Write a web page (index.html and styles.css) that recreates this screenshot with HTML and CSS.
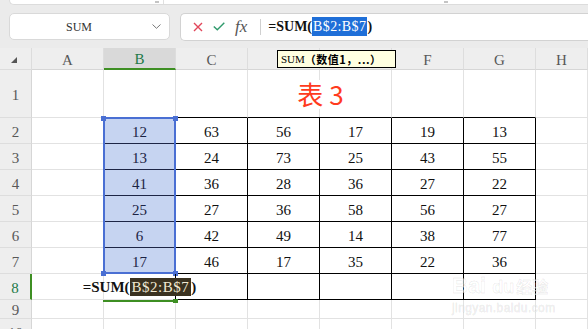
FILE: index.html
```html
<!DOCTYPE html>
<html lang="zh">
<head>
    <meta charset="UTF-8">
    <meta name="viewport" content="width=device-width, initial-scale=1.0">
    <title>表 3 - SUM</title>
    <link rel="stylesheet" href="styles.css">
</head>
<body>
<div class="app">
    <!-- window strip above the toolbar -->
    <div class="top-strip">
        <span class="grip"></span>
        <span class="strip-divider"></span>
        <span class="grip grip-far"></span>
    </div>

    <!-- Name box + formula bar -->
    <div class="toolbar">
        <div class="name-box">
            <span class="name-text">SUM</span>
            <svg class="chevron" width="9" height="5" viewBox="0 0 9 5"><path d="M0.5 0.5 L4.5 4.3 L8.5 0.5" fill="none" stroke="#777" stroke-width="1"/></svg>
        </div>
        <div class="formula-bar">
            <svg class="fb-cancel" width="10" height="10" viewBox="0 0 10 10"><path d="M1 1 L9 9 M9 1 L1 9" stroke="#e2465a" stroke-width="1.4"/></svg>
            <svg class="fb-ok" width="12" height="9" viewBox="0 0 12 9"><path d="M0.8 4.4 L4.3 7.8 L11.3 0.8" fill="none" stroke="#2f9a6c" stroke-width="1.4"/></svg>
            <span class="fb-fx">fx</span>
            <span class="fb-divider"></span>
            <span class="fb-text">=SUM(<span class="ref-edit">B$2:B$7</span>)</span>
        </div>
    </div>

    <!-- Sheet -->
    <div class="sheet">
        <div class="corner"><span class="corner-mark"></span></div>
        <div class="ch">A</div>
        <div class="ch active">B</div>
        <div class="ch">C</div>
        <div class="ch"></div>
        <div class="ch"></div>
        <div class="ch">F</div>
        <div class="ch">G</div>
        <div class="ch">H</div>

        <div class="rh tall">1</div>
        <div class="c"></div>
        <div class="c tt"></div>
        <div class="c tt"></div>
        <div class="c tt title-cell"><span class="title">表 3</span></div>
        <div class="c tt"></div>
        <div class="c tt"></div>
        <div class="c"></div>

        <div class="rh">2</div>
        <div class="c tl"></div>
        <div class="c t sel">12</div>
        <div class="c t">63</div>
        <div class="c t">56</div>
        <div class="c t">17</div>
        <div class="c t">19</div>
        <div class="c t">13</div>
        <div class="c"></div>

        <div class="rh">3</div>
        <div class="c tl"></div>
        <div class="c t sel">13</div>
        <div class="c t">24</div>
        <div class="c t">73</div>
        <div class="c t">25</div>
        <div class="c t">43</div>
        <div class="c t">55</div>
        <div class="c"></div>

        <div class="rh">4</div>
        <div class="c tl"></div>
        <div class="c t sel">41</div>
        <div class="c t">36</div>
        <div class="c t">28</div>
        <div class="c t">36</div>
        <div class="c t">27</div>
        <div class="c t">22</div>
        <div class="c"></div>

        <div class="rh">5</div>
        <div class="c tl"></div>
        <div class="c t sel">25</div>
        <div class="c t">27</div>
        <div class="c t">36</div>
        <div class="c t">58</div>
        <div class="c t">56</div>
        <div class="c t">27</div>
        <div class="c"></div>

        <div class="rh">6</div>
        <div class="c tl"></div>
        <div class="c t sel">6</div>
        <div class="c t">42</div>
        <div class="c t">49</div>
        <div class="c t">14</div>
        <div class="c t">38</div>
        <div class="c t">77</div>
        <div class="c"></div>

        <div class="rh">7</div>
        <div class="c tl"></div>
        <div class="c t sel">17</div>
        <div class="c t">46</div>
        <div class="c t">17</div>
        <div class="c t">35</div>
        <div class="c t">22</div>
        <div class="c t">36</div>
        <div class="c"></div>

        <div class="rh active">8</div>
        <div class="c"></div>
        <div class="c editing"><span class="cell-formula">=SUM(<span class="ref-cell">B$2:B$7</span>)</span></div>
        <div class="c t"></div>
        <div class="c t"></div>
        <div class="c t"></div>
        <div class="c t"></div>
        <div class="c t"></div>
        <div class="c"></div>

        <div class="rh short">9</div>
        <div class="c"></div>
        <div class="c"></div>
        <div class="c"></div>
        <div class="c"></div>
        <div class="c"></div>
        <div class="c"></div>
        <div class="c"></div>
        <div class="c"></div>

        <div class="rh">10</div>
        <div class="c"></div>
        <div class="c"></div>
        <div class="c"></div>
        <div class="c"></div>
        <div class="c"></div>
        <div class="c"></div>
        <div class="c"></div>
        <div class="c"></div>

        <!-- range picked by the formula -->
        <div class="selection">
            <span class="handle tl-h"></span>
            <span class="handle tr-h"></span>
            <span class="handle bl-h"></span>
            <span class="handle br-h"></span>
        </div>
    </div>

    <!-- argument tooltip -->
    <div class="tooltip">SUM<b>（数值1，...）</b></div>

    <!-- faint site watermark -->
    <div class="watermark">
        <div class="wm-logo">Bai<span class="wm-du">du</span><span class="wm-cn">经验</span></div>
        <div class="wm-url">jingyan.baidu.com</div>
    </div>
</div>
</body>
</html>
```

FILE: styles.css
```css
* {
    box-sizing: border-box;
}

body {
    margin: 0;
    overflow: hidden;
    font-family: "Liberation Serif", "Noto Sans CJK SC", serif;
}

.app {
    position: relative;
    width: 588px;
    height: 329px;
    overflow: hidden;
    background: #ebebeb;
}

/* Top strip */
.top-strip {
    height: 5px;
    margin-left: 9px;
    background: #fff;
    border-left: 1px solid #dcdcdc;
    border-bottom: 1px solid #dcdcdc;
    border-bottom-left-radius: 5px;
    display: flex;
}

.grip {
    width: 4px;
    height: 2px;
    margin-left: 145px;
    margin-top: 1px;
    background: #c4c4c4;
}

.strip-divider {
    width: 1px;
    margin-left: 4px;
    background: #e0e0e0;
}

.grip-far {
    margin-left: 280px;
}

/* Toolbar */
.toolbar {
    height: 43px;
    display: flex;
    align-items: center;
    padding-left: 9px;
    gap: 10px;
}

.name-box {
    width: 161px;
    height: 27px;
    background: #fff;
    border: 1px solid #d9d9d9;
    border-radius: 5px;
    display: grid;
    grid-template-columns: 1fr 16px;
    align-items: center;
    padding-right: 5px;
}

.name-text {
    text-align: center;
    font-size: 12px;
    color: #333;
    padding-top: 1px;
}

.chevron {
    display: block;
    margin-left: 4px;
}

.formula-bar {
    flex: 1;
    height: 28px;
    background: #fff;
    border: 1px solid #d2d2d2;
    border-right: none;
    border-radius: 5px 0 0 5px;
    display: flex;
    align-items: center;
    padding-left: 12px;
}

.fb-ok {
    margin-left: 10px;
}

.fb-fx {
    margin-left: 10px;
    font-style: italic;
    font-size: 17px;
    color: #555;
    line-height: 1;
}

.fb-divider {
    width: 1px;
    height: 16px;
    margin-left: 13px;
    background: #d0d0d0;
}

.fb-text {
    margin-left: 7px;
    font-size: 14px;
    font-weight: bold;
    color: #111;
    white-space: nowrap;
}

.ref-edit {
    background: #1f6fd8;
    color: #fff;
    font-weight: normal;
    padding: 2px 1px;
    letter-spacing: 0.4px;
}

/* Sheet grid */
.sheet {
    position: relative;
    display: grid;
    grid-template-columns: 32px repeat(7, 72px) 52px;
    grid-template-rows: 22px 48px repeat(7, 26px) 19px 26px;
    background: #fff;
    font-size: 15px;
    color: #111;
}

.corner,
.ch,
.rh {
    background: #eeeeee;
    color: #585858;
    display: flex;
    align-items: center;
    justify-content: center;
}

.corner {
    border-right: 1px solid #dcdcdc;
    border-bottom: 1px solid #dcdcdc;
    justify-content: flex-start;
    padding-left: 11px;
    padding-top: 3px;
}

.corner-mark {
    width: 0;
    height: 0;
    border-left: 6px solid transparent;
    border-bottom: 6px solid #555;
}

.ch {
    font-size: 15px;
    border-right: 1px solid #dddddd;
    border-bottom: 1px solid #d6d6d6;
    padding-top: 3px;
}

.ch.active {
    background: #d9d9d9;
    color: #1d7a48;
    border-bottom: 2px solid #3e8f23;
}

.rh {
    font-size: 15px;
    border-right: 1px solid #d6d6d6;
    border-bottom: 1px solid #dddddd;
    padding-top: 3px;
}

.rh.active {
    color: #1d7a48;
    border-right: 2px solid #3e8f23;
}

.c {
    border-right: 1px solid #e2e2e2;
    border-bottom: 1px solid #e2e2e2;
    display: flex;
    align-items: center;
    justify-content: center;
    padding-top: 3px;
}

/* table borders */
.tt {
    border-bottom-color: #000;
}

.tl {
    border-right-color: #000;
}

.t {
    border-right-color: #000;
    border-bottom-color: #000;
}

.sel {
    background: #c6d4f1;
    color: #1b2344;
    border-bottom-color: #1d2546;
}

/* Title row */
.title-cell {
    grid-column: span 2;
    position: relative;
    padding-top: 2px;
}

.title-cell::after {
    content: '';
    position: absolute;
    top: 0;
    bottom: 0;
    left: 71px;
    width: 1px;
    background: #e2e2e2;
}

.title {
    position: relative;
    z-index: 1;
    background: #fff;
    padding: 0 2px 0 4px;
    font-family: "Noto Sans CJK SC", sans-serif;
    font-size: 26px;
    line-height: 1.1;
    color: #ff3b1e;
    white-space: nowrap;
}

/* Cell being edited */
.editing {
    position: relative;
    z-index: 1;
    border-right-color: #000;
    white-space: nowrap;
    padding-top: 2px;
}

.editing::after {
    content: '';
    position: absolute;
    left: -1px;
    right: 1px;
    bottom: -3px;
    height: 2px;
    background: #3e8f23;
}

.editing::before {
    content: '';
    position: absolute;
    right: -3px;
    bottom: -4px;
    width: 5px;
    height: 4px;
    background: #3e8f23;
}

.cell-formula {
    font-size: 15px;
    font-weight: bold;
    color: #111;
}

.ref-cell {
    background: #3a3220;
    color: #f1ead2;
    font-weight: normal;
    padding: 1px 2px;
    letter-spacing: 0.5px;
}

/* Selection box over B2:B7 */
.selection {
    position: absolute;
    left: 103px;
    top: 69px;
    width: 73px;
    height: 157px;
    border: 2px solid #4a6fd3;
    pointer-events: none;
}

.handle {
    position: absolute;
    width: 5px;
    height: 5px;
    background: #4a6fd3;
}

.tl-h {
    left: -4px;
    top: -3px;
}

.tr-h {
    right: -4px;
    top: -3px;
}

.bl-h {
    left: -4px;
    bottom: -4px;
}

.br-h {
    right: -4px;
    bottom: -4px;
}

/* Argument tooltip */
.tooltip {
    position: absolute;
    left: 277px;
    top: 50px;
    width: 119px;
    height: 18px;
    background: #ffffe1;
    border: 1px solid #000;
    display: flex;
    align-items: center;
    padding-left: 3px;
    font-size: 11px;
    color: #000;
    white-space: nowrap;
    overflow: hidden;
}

.tooltip b {
    font-family: "Noto Sans CJK SC", sans-serif;
    font-size: 11px;
    letter-spacing: 0.5px;
}

/* Watermark */
.watermark {
    position: absolute;
    left: 452px;
    top: 274px;
    pointer-events: none;
    color: rgba(255, 255, 255, 0.6);
    -webkit-text-stroke: 1px rgba(0, 0, 0, 0.07);
    font-family: "Liberation Sans", sans-serif;
    font-weight: bold;
}

.wm-logo {
    font-size: 22px;
    line-height: 24px;
    white-space: nowrap;
}

.wm-du {
    margin-left: 6px;
    font-size: 18px;
}

.wm-cn {
    margin-left: 2px;
    font-family: "Noto Sans CJK SC", sans-serif;
    font-size: 16px;
}

.wm-url {
    margin-top: 2px;
    font-size: 12px;
    font-weight: normal;
    letter-spacing: 0.4px;
}
```
